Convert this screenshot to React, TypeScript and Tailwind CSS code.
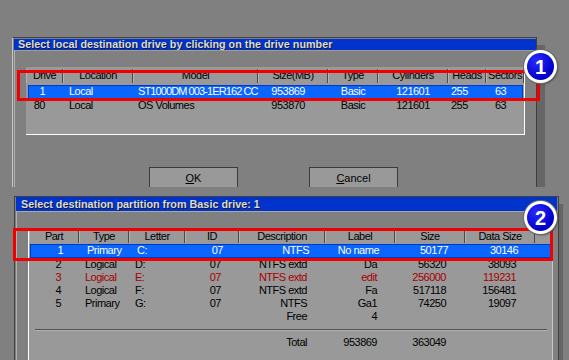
import React from "react";

type Col = { h: string; w: string; a: string };

const cols1: Col[] = [
  { h: "Drive", w: "w-[37px]", a: "justify-end pr-[18px]" },
  { h: "Location", w: "w-[70px]", a: "justify-start pl-[6px]" },
  { h: "Model", w: "w-[125px]", a: "justify-start pl-[5px]" },
  { h: "Size(MB)", w: "w-[70px]", a: "justify-end pr-[23px]" },
  { h: "Type", w: "w-[50px]", a: "justify-center" },
  { h: "Cylinders", w: "w-[70px]", a: "justify-center" },
  { h: "Heads", w: "w-[38px]", a: "justify-start pl-[3px]" },
  { h: "Sectors", w: "w-[38px]", a: "justify-start pl-[9px]" },
];

const rows1: React.ReactNode[][] = [
  [
    "1",
    "Local",
    <span className="tracking-[-0.9px]">ST1000DM 003-1ER162 CC</span>,
    "953869",
    "Basic",
    "121601",
    "255",
    "63",
  ],
  ["80", "Local", "OS Volumes", "953870", "Basic", "121601", "255", "63"],
];

const cols2: Col[] = [
  { h: "Part", w: "w-[50px]", a: "justify-end pr-[18px]" },
  { h: "Type", w: "w-[50px]", a: "justify-start pl-[6px]" },
  { h: "Letter", w: "w-[56px]", a: "justify-start pl-[6px]" },
  { h: "ID", w: "w-[54px]", a: "justify-end pr-[18px]" },
  { h: "Description", w: "w-[86px]", a: "justify-end pr-[18px]" },
  { h: "Label", w: "w-[70px]", a: "justify-end pr-[18px]" },
  { h: "Size", w: "w-[70px]", a: "justify-end pr-[19px]" },
  { h: "Data Size", w: "w-[70px]", a: "justify-end pr-[19px]" },
];

const rows2: { c: string[]; red?: boolean }[] = [
  { c: ["2", "Logical", "D:", "07", "NTFS extd", "Da", "56320", "38093"] },
  { c: ["3", "Logical", "E:", "07", "NTFS extd", "edit", "256000", "119231"], red: true },
  { c: ["4", "Logical", "F:", "07", "NTFS extd", "Fa", "517118", "156481"] },
  { c: ["5", "Primary", "G:", "07", "NTFS", "Ga1", "74250", "19097"] },
  { c: ["", "", "", "", "Free", "4", "", ""] },
];

const sel2 = ["1", "Primary", "C:", "07", "NTFS", "No name", "50177", "30146"];
const total2 = ["", "", "", "", "Total", "953869", "363049", ""];

function Header({ cols }: { cols: Col[] }) {
  return (
    <div className="flex h-[14px]">
      {cols.map((c) => (
        <div
          key={c.h}
          className={`${c.w} shrink-0 flex items-center justify-center border-r border-r-[#4a4a4a] border-l border-l-[#b4b4b4] text-black`}
        >
          {c.h}
        </div>
      ))}
    </div>
  );
}

function Row({ cols, cells, cls }: { cols: Col[]; cells: React.ReactNode[]; cls?: string }) {
  return (
    <div className={`flex h-[13px] items-center ${cls ?? ""}`}>
      {cols.map((c, i) => (
        <div key={i} className={`${c.w} shrink-0 flex items-center whitespace-nowrap ${c.a}`}>
          {cells[i]}
        </div>
      ))}
    </div>
  );
}

function Badge({ n, pos }: { n: string; pos: string }) {
  return (
    <div
      className={`absolute ${pos} w-[33px] h-[33px] rounded-full bg-white p-[3px] shadow-[0_0_0_1px_#6a6a6a,1px_1px_2px_#404040]`}
    >
      <div className="w-full h-full rounded-full bg-[radial-gradient(circle_at_35%_30%,#2a2aff,#0000c8_70%)] flex items-center justify-center text-white font-bold text-[20px] leading-none tracking-normal font-['Liberation_Sans',Arial,sans-serif]">
        {n}
      </div>
    </div>
  );
}

const titleCls =
  "h-[14px] bg-[#0033cc] flex items-center text-[#dcdcdc] font-bold text-[10.8px] tracking-normal whitespace-nowrap [text-shadow:1px_1px_0_#1a1a1a] font-['Liberation_Sans',Arial,sans-serif]";

export default function App() {
  return (
    <div className="relative w-[569px] h-[360px] overflow-hidden bg-[#808080] font-['Liberation_Sans',Arial,sans-serif] text-[11px] tracking-[-0.5px] leading-none">
      {/* Dialog 1 shadow */}
      <div className="absolute left-[537px] top-[45px] w-[8px] h-[142px] bg-[#666666]" />
      {/* Dialog 1 */}
      <div className="absolute left-[12px] top-[37px] w-[525px] h-[150px] overflow-hidden bg-[#808080] border-t border-t-[#404040] border-l border-l-[#c4c4c4] border-r border-r-[#404040] flex flex-col">
        <div className={`mt-[1px] ml-[1px] pl-[4px] ${titleCls}`}>
          Select local destination drive by clicking on the drive number
        </div>
        <div className="flex-1 ml-[1px] border-l border-l-[#b0b0b0] border-t border-t-[#9a9a9a] flex flex-col">
          <div className="mt-[16px] ml-[11px] w-[499px] h-[68px] bg-[#999999] border-r border-r-white border-b border-b-white flex flex-col pt-[2px]">
            <Header cols={cols1} />
            <div className="mt-[2px] ml-[2px] w-[495px] border border-[#0038c8] bg-[#0a66ff] text-white">
              <div className="-ml-[3px] -mt-px">
                <Row cols={cols1} cells={rows1[0]} />
              </div>
            </div>
            <Row cols={cols1} cells={rows1[1]} cls="text-black" />
          </div>
          <div className="mt-[32px] ml-[134px] flex gap-[71px] tracking-normal">
            <div className="w-[89px] h-[23px] bg-[#999999] border border-[#3c3c3c] flex justify-center pt-[5px] text-black text-[11px]">
              <span>
                <span className="underline underline-offset-1">O</span>K
              </span>
            </div>
            <div className="w-[89px] h-[23px] bg-[#999999] border border-[#3c3c3c] flex justify-center pt-[5px] text-black text-[11px]">
              <span>
                <span className="underline underline-offset-1">C</span>ancel
              </span>
            </div>
          </div>
        </div>
      </div>

      {/* Dialog 2 shadow */}
      <div className="absolute left-[559px] top-[204px] w-[4px] h-[156px] bg-[#666666]" />
      {/* Dialog 2 */}
      <div className="absolute left-[14px] top-[196px] w-[545px] h-[170px] bg-[#808080] border-t border-t-[#404040] border-l border-l-[#404040] border-r border-r-[#404040] flex flex-col">
        <div className={`ml-[1px] mr-[1px] pl-[5px] ${titleCls}`}>
          Select destination partition from Basic drive: 1
        </div>
        <div className="flex-1 ml-[1px] border-l border-l-[#b0b0b0] border-t border-t-[#a8a8a8] flex flex-col">
          <div className="mt-[17px] ml-[11px] w-[525px] flex-1 bg-[#999999] border-l border-l-white border-r border-r-[#c8c8c8] flex flex-col">
            <Header cols={cols2} />
            <div className="mt-px ml-px w-[521px] border border-[#0038c8] bg-[#0a66ff] text-white">
              <div className="-mt-px">
                <Row cols={cols2} cells={sel2} />
              </div>
            </div>
            {rows2.map((r, i) => (
              <Row key={i} cols={cols2} cells={r.c} cls={r.red ? "text-[#a80000]" : "text-black"} />
            ))}
            <div className="h-[13px] flex flex-col justify-center pl-[6px] pr-[5px]">
              <div className="h-px bg-[#505050]" />
              <div className="h-px bg-[#b0b0b0]" />
            </div>
            <Row cols={cols2} cells={total2} cls="text-black" />
          </div>
        </div>
      </div>

      {/* Red highlight boxes */}
      <div className="absolute left-[17px] top-[70px] w-[523px] h-[31px] border-[3px] border-[#f00000]" />
      <div className="absolute left-[13px] top-[228px] w-[540px] h-[33px] border-[3px] border-[#f00000]" />

      <Badge n="1" pos="left-[524px] top-[50px]" />
      <Badge n="2" pos="left-[524px] top-[201px]" />
    </div>
  );
}
